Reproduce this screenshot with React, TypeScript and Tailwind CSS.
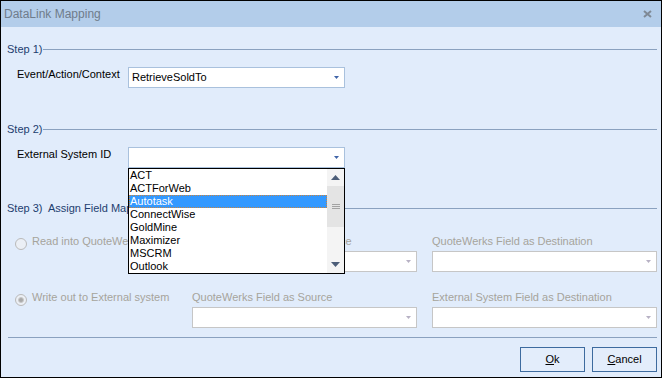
import React from 'react';

const systems = ['ACT', 'ACTForWeb', 'Autotask', 'ConnectWise', 'GoldMine', 'Maximizer', 'MSCRM', 'Outlook'];

function Arrow({ disabled }: { disabled?: boolean }) {
  return (
    <svg width="5" height="3" viewBox="0 0 5 3" className="shrink-0">
      <path d="M0 0h5L2.5 3z" fill={disabled ? '#b7b1c4' : '#3f64a8'} />
    </svg>
  );
}

function Combo({ value, disabled, width }: { value?: string; disabled?: boolean; width: string }) {
  return (
    <div
      className={`${width} h-[21px] shrink-0 bg-white border flex items-center justify-between pl-[3px] pr-[5px] ${
        disabled ? 'border-[#c6c6c6]' : 'border-[#a9c1dd]'
      }`}
    >
      <span>{value}</span>
      <Arrow disabled={disabled} />
    </div>
  );
}

function StepHeader({ children, className }: { children: React.ReactNode; className: string }) {
  return (
    <div className={`${className} ml-[6px] h-[13px] flex items-center text-[#1d3e6f]`}>
      <span className="whitespace-pre">{children}</span>
      <div className="flex-1 h-px bg-[#8aa1bf] ml-[1px]" />
    </div>
  );
}

function Radio({ checked }: { checked?: boolean }) {
  return (
    <div className="w-[12px] h-[12px] rounded-full border border-[#bababa] bg-[#ebeff5] flex items-center justify-center shrink-0">
      {checked && <div className="w-[6px] h-[6px] rounded-full bg-[#a9a9a9] border border-[#c9c9c9]" />}
    </div>
  );
}

function SystemList() {
  return (
    <div className="absolute left-0 top-[21px] w-[217px] h-[106px] border border-black bg-white flex z-10 text-black">
      <div className="w-[198px] flex flex-col">
        {systems.map((s) =>
          s === 'Autotask' ? (
            <div
              key={s}
              className="h-[13px] leading-[13px] pl-[1px] bg-[#3399ff] text-white outline-1 outline-dotted outline-[#c9843f] -outline-offset-1"
            >
              {s}
            </div>
          ) : (
            <div key={s} className="h-[13px] leading-[13px] pl-[1px]">
              {s}
            </div>
          )
        )}
      </div>
      <div className="w-[17px] bg-[#f4f4f4] flex flex-col">
        <div className="h-[17px] flex items-center justify-center">
          <svg width="9" height="5" viewBox="0 0 9 5">
            <path d="M4.5 0L9 5H0z" fill="#4c5d78" />
          </svg>
        </div>
        <div className="h-[41px] bg-[#e4e4e4] flex flex-col items-center justify-center gap-[1px]">
          <div className="w-[8px] h-px bg-[#a2a2a2]" />
          <div className="w-[8px] h-px bg-[#a2a2a2]" />
          <div className="w-[8px] h-px bg-[#a2a2a2]" />
        </div>
        <div className="flex-1" />
        <div className="h-[17px] flex items-center justify-center">
          <svg width="9" height="5" viewBox="0 0 9 5">
            <path d="M0 0h9L4.5 5z" fill="#4c5d78" />
          </svg>
        </div>
      </div>
    </div>
  );
}

function MapRow({ className, label, checked, source, dest }: { className: string; label: string; checked?: boolean; source: string; dest: string }) {
  return (
    <div className={`${className} flex text-[#a6a49b]`}>
      <div className="w-[191px] pl-[14px] pt-[3px] flex items-start">
        <Radio checked={checked} />
        <span className="ml-[5px] -mt-[3px] whitespace-nowrap">{label}</span>
      </div>
      <div className="w-[225px] flex flex-col">
        <span className="h-[13px] mb-[3px] whitespace-nowrap">{source}</span>
        <Combo disabled width="w-[225px]" />
      </div>
      <div className="w-[225px] ml-[15px] flex flex-col">
        <span className="h-[13px] mb-[3px] whitespace-nowrap">{dest}</span>
        <Combo disabled width="w-[225px]" />
      </div>
    </div>
  );
}

export default function App() {
  return (
    <div className="w-[662px] h-[378px] border border-black bg-[#e1ecfb] flex flex-col overflow-hidden font-['Liberation_Sans',Arial,sans-serif] text-[11px] leading-[13px] text-black">
      <div className="h-[26px] shrink-0 bg-[#b3cdea] flex items-center justify-between pl-[3px] pr-[9px]">
        <span className="text-[12px] text-[#6f7c8b]">DataLink Mapping</span>
        <svg width="9" height="8" viewBox="0 0 9 8">
          <path d="M1 1l7 6M8 1L1 7" stroke="#7f8995" strokeWidth="2" />
        </svg>
      </div>

      <div className="flex flex-col pr-[4px]">
        <StepHeader className="mt-[16px]">Step 1)</StepHeader>
        <div className="mt-[11px] flex items-start">
          <span className="ml-[16px] w-[111px] pt-[1px]">Event/Action/Context</span>
          <Combo value="RetrieveSoldTo" width="w-[217px]" />
        </div>

        <StepHeader className="mt-[35px]">Step 2)</StepHeader>
        <div className="mt-[11px] flex items-start">
          <span className="ml-[16px] w-[111px] pt-[1px]">External System ID</span>
          <div className="relative w-[217px]">
            <Combo width="w-[217px]" />
            <SystemList />
          </div>
        </div>

        <StepHeader className="mt-[34px]">{'Step 3)  Assign Field Mappings'}</StepHeader>
        <MapRow
          className="mt-[20px]"
          label="Read into QuoteWerks"
          source="External System Field as Source"
          dest="QuoteWerks Field as Destination"
        />
        <MapRow
          className="mt-[19px]"
          label="Write out to External system"
          checked
          source="QuoteWerks Field as Source"
          dest="External System Field as Destination"
        />

        <div className="mt-[9px] ml-[7px] h-px bg-[#8aa1bf]" />
        <div className="mt-[9px] flex justify-end gap-[7px]">
          <button className="w-[65px] h-[25px] border border-[#3d6b9f] bg-[#e3edfb] text-black">
            <span className="underline">O</span>k
          </button>
          <button className="w-[65px] h-[25px] border border-[#3d6b9f] bg-[#e3edfb] text-black">
            <span className="underline">C</span>ancel
          </button>
        </div>
      </div>
    </div>
  );
}
